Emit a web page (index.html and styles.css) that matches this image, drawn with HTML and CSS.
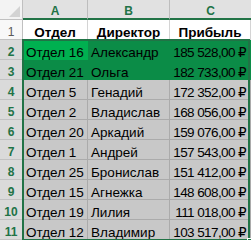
FILE: index.html
```html
<!DOCTYPE html>
<html lang="ru">
<head>
<meta charset="utf-8">
<title>Таблица</title>
<link rel="stylesheet" href="styles.css">
</head>
<body>
<div class="sheet">
  <div class="corner"><svg class="tri" width="22" height="19" viewBox="0 0 22 19"><polygon points="9,17 20,6 20,17" fill="#d3d3d3"/></svg></div>
  <div class="colhead">A</div>
  <div class="colhead">B</div>
  <div class="colhead last">C</div>

  <div class="rowhead plain">1</div>
  <div class="cell head">Отдел</div>
  <div class="cell head">Директор</div>
  <div class="cell head">Прибыль</div>

  <div class="rowhead">2</div>
  <div class="cell green active">Отдел 16</div>
  <div class="cell green">Александр</div>
  <div class="cell green num">185 528,00 ₽</div>

  <div class="rowhead">3</div>
  <div class="cell green">Отдел 21</div>
  <div class="cell green">Ольга</div>
  <div class="cell green num">182 733,00 ₽</div>

  <div class="rowhead">4</div>
  <div class="cell">Отдел 5</div>
  <div class="cell">Генадий</div>
  <div class="cell num">172 352,00 ₽</div>

  <div class="rowhead">5</div>
  <div class="cell">Отдел 2</div>
  <div class="cell">Владислав</div>
  <div class="cell num">168 056,00 ₽</div>

  <div class="rowhead">6</div>
  <div class="cell">Отдел 20</div>
  <div class="cell">Аркадий</div>
  <div class="cell num">159 076,00 ₽</div>

  <div class="rowhead">7</div>
  <div class="cell">Отдел 1</div>
  <div class="cell">Андрей</div>
  <div class="cell num">157 543,00 ₽</div>

  <div class="rowhead">8</div>
  <div class="cell">Отдел 25</div>
  <div class="cell">Бронислав</div>
  <div class="cell num">151 412,00 ₽</div>

  <div class="rowhead">9</div>
  <div class="cell">Отдел 15</div>
  <div class="cell">Агнежка</div>
  <div class="cell num">148 608,00 ₽</div>

  <div class="rowhead">10</div>
  <div class="cell">Отдел 19</div>
  <div class="cell">Лилия</div>
  <div class="cell num">111 018,00 ₽</div>

  <div class="rowhead">11</div>
  <div class="cell">Отдел 12</div>
  <div class="cell">Владимир</div>
  <div class="cell num">103 517,00 ₽</div>

  <div class="selection"></div>
  <div class="handle"></div>
</div>
</body>
</html>
```

FILE: styles.css
```css
html, body {
  margin: 0;
  padding: 0;
  background: #ffffff;
}

.sheet {
  position: relative;
  display: grid;
  grid-template-columns: 23px 65px 82px 81px;
  grid-template-rows: repeat(12, 20px);
  width: 251px;
  font-family: "Liberation Sans", "DejaVu Sans", sans-serif;
  color: #000;
}

.sheet > div {
  box-sizing: border-box;
  white-space: nowrap;
}

.corner {
  position: relative;
  background: #f3f3f3;
  border-right: 1px solid #c0c0c0;
  border-bottom: 1px solid #c0c0c0;
}

.tri {
  display: block;
}

.colhead {
  background: #e1e1e1;
  color: #217346;
  font-size: 12px;
  font-weight: bold;
  line-height: 14px;
  padding-top: 4px;
  text-align: center;
  border-right: 1px solid #bdbdbd;
  border-bottom: 2px solid #217346;
}

.colhead.last {
  border-right: none;
}

.rowhead {
  background: #dadada;
  color: #217346;
  font-size: 12px;
  font-weight: bold;
  line-height: 14px;
  padding-top: 5px;
  text-align: center;
  border-right: 1px solid #217346;
  border-bottom: 1px solid #c2c2c2;
}

.rowhead.plain {
  background: #f8f8f8;
  color: #5a5a5a;
  font-weight: normal;
  border-right: 1px solid #c0c0c0;
}

.cell {
  background: #c8c8c8;
  font-size: 13.5px;
  line-height: 15px;
  padding: 5px 3px 0 3px;
  border-right: 1px solid #ababab;
  border-bottom: 1px solid #ababab;
  overflow: visible;
}

.cell.head {
  background: #ffffff;
  font-weight: bold;
  text-align: center;
  border-right-color: #d4d4d4;
  border-bottom-color: #d4d4d4;
}

.cell.green {
  background: #0b8c47;
  border-color: #0b8c47;
}

.cell.green.active {
  background: #00b050;
  border-color: #00b050;
}

.cell.num {
  text-align: right;
  letter-spacing: -0.6px;
  padding-right: 4px;
}

.selection {
  position: absolute;
  left: 22px;
  top: 39px;
  width: 228px;
  height: 202px;
  box-sizing: border-box;
  border: 2px solid #217346;
  pointer-events: none;
}

.handle {
  position: absolute;
  left: 247px;
  top: 238px;
  width: 6px;
  height: 6px;
  box-sizing: border-box;
  background: #217346;
  border: 1px solid #ffffff;
}
```
